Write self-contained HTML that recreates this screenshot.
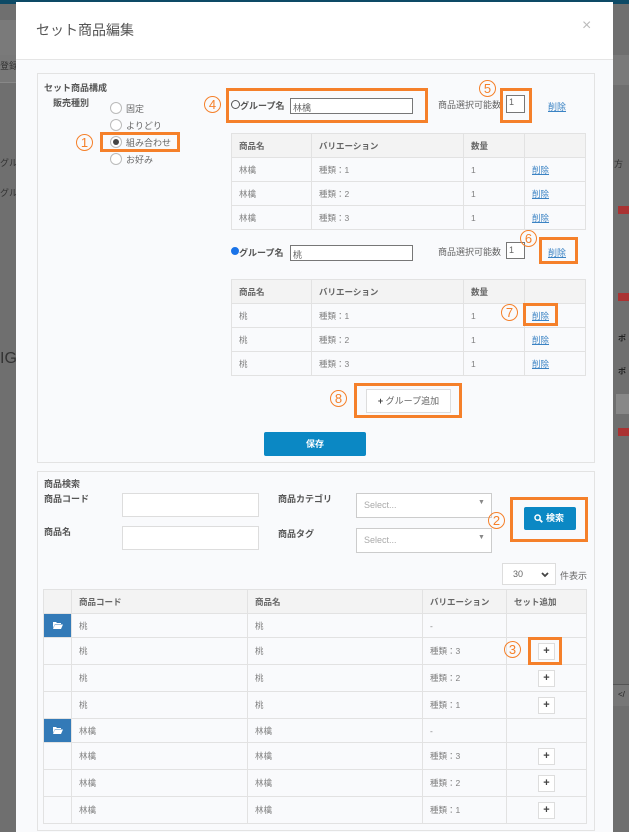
<!DOCTYPE html>
<html><head><meta charset="utf-8"><style>
*{box-sizing:border-box;margin:0;padding:0}
body{width:629px;height:821px;overflow:hidden;background:#6f6f6f;font-family:"Liberation Sans","Noto Sans CJK JP",sans-serif;color:#666;font-size:9px;position:relative}
.a{position:absolute}
.t{position:absolute;white-space:nowrap}
.ob{position:absolute;border:3px solid #f5802a}
.num{position:absolute;width:17px;height:17px;border:1px solid #f5802a;border-radius:50%;color:#f5802a;font-size:13px;line-height:15px;text-align:center}
.inp{position:absolute;background:#fff;border:1px solid #777}
.in2{position:absolute;background:#fff;border:1px solid #ddd}
table{position:absolute;border-collapse:collapse;font-size:8.5px;color:#808080}
td,th{border:1px solid #e2e2e2;padding:0 7px;text-align:left;font-weight:bold}
td{font-weight:normal}
th{background:#f3f3f3;color:#666}
td{background:#f9fafc}
.lk{color:#3b83c4;text-decoration:underline}
.rd{position:absolute;width:12px;height:12px;border:1px solid #bbb;border-radius:50%;background:#fff}
.pl{display:inline-block;width:17px;height:17px;border:1px solid #ddd;background:#fff;text-align:center;line-height:15px;font-weight:bold;color:#444;font-size:11px}
.fd{background:#337ab7!important;padding:0;text-align:center}
</style></head><body>
<div class="a" style="left:0;top:0;width:629px;height:4px;background:#0d4a66"></div>
<div class="a" style="left:0;top:20px;width:16px;height:35px;background:#7a7a7a"></div>
<div class="a" style="left:0;top:55px;width:16px;height:28px;background:#787878;border-bottom:1px solid #888"></div>
<div class="t" style="left:0;top:59px;font-size:9px;color:#333">登録</div>
<div class="t" style="left:0;top:156px;font-size:9px;color:#333">グル</div>
<div class="t" style="left:0;top:186px;font-size:9px;color:#333">グル</div>
<div class="t" style="left:0;top:350px;font-size:16px;color:#333">IG,</div>
<div class="a" style="left:613px;top:55px;width:16px;height:30px;background:#7a7a7a"></div>
<div class="t" style="left:614px;top:157px;font-size:9px;color:#333">方</div>
<div class="a" style="left:618px;top:206px;width:11px;height:8px;background:#a33"></div>
<div class="a" style="left:618px;top:293px;width:11px;height:8px;background:#a33"></div>
<div class="a" style="left:618px;top:428px;width:11px;height:8px;background:#a33"></div>
<div class="t" style="left:618px;top:333px;font-size:8px;color:#222;font-weight:bold">ポ</div>
<div class="t" style="left:618px;top:366px;font-size:8px;color:#222;font-weight:bold">ポ</div>
<div class="a" style="left:616px;top:394px;width:13px;height:20px;background:#888"></div>
<div class="a" style="left:613px;top:684px;width:16px;height:22px;background:#777;border-top:1px solid #555"></div>
<div class="t" style="left:618px;top:690px;font-size:8px;color:#222">&lt;/</div>

<div class="a" style="left:16px;top:2px;width:597px;height:830px;background:#f9fafc"></div>
<div class="a" style="left:16px;top:2px;width:597px;height:58px;background:#fff;border-bottom:1px solid #e5e5e5"></div>
<div class="t" style="left:36px;top:20px;font-size:14px;color:#555">セット商品編集</div>
<div class="t" style="left:582px;top:17px;font-size:16px;color:#bbb">×</div>

<div class="a" style="left:37px;top:73px;width:558px;height:390px;border:1px solid #e3e3e3;background:#f9fafc"></div>
<div class="t" style="left:44px;top:81px;font-weight:bold;color:#555">セット商品構成</div>
<div class="t" style="left:53px;top:96px;font-weight:bold;color:#555">販売種別</div>
<div class="rd" style="left:110px;top:102px"></div><div class="t" style="left:126px;top:102px">固定</div>
<div class="rd" style="left:110px;top:119px"></div><div class="t" style="left:126px;top:119px">よりどり</div>
<div class="rd" style="left:110px;top:136px"></div><div class="a" style="left:113px;top:139px;width:6px;height:6px;border-radius:50%;background:#444"></div><div class="t" style="left:126px;top:136px">組み合わせ</div>
<div class="rd" style="left:110px;top:153px"></div><div class="t" style="left:126px;top:153px">お好み</div>
<div class="ob" style="left:100px;top:132px;width:80px;height:20px"></div>
<div class="num" style="left:76px;top:134px">1</div>

<div class="ob" style="left:226px;top:88px;width:202px;height:35px"></div>
<div class="num" style="left:204px;top:96px">4</div>
<div class="a" style="left:231px;top:100px;width:9px;height:9px;border:1px solid #555;border-radius:50%"></div>
<div class="t" style="left:240px;top:99px;font-weight:bold;color:#555">グループ名</div>
<div class="inp" style="left:290px;top:98px;width:123px;height:16px"><span class="t" style="left:2px;top:2px">林檎</span></div>
<div class="t" style="left:438px;top:98px">商品選択可能数</div>
<div class="inp" style="left:506px;top:95px;width:19px;height:18px"><span class="t" style="left:2px;top:1px">1</span></div>
<div class="ob" style="left:500px;top:88px;width:32px;height:35px"></div>
<div class="num" style="left:479px;top:80px">5</div>
<div class="t lk" style="left:548px;top:100px">削除</div>

<table style="left:231px;top:133px;width:355px">
<tr style="height:24px"><th style="width:80px">商品名</th><th style="width:152px">バリエーション</th><th style="width:61px">数量</th><th></th></tr>
<tr style="height:24px"><td>林檎</td><td>種類：1</td><td>1</td><td><span class="lk">削除</span></td></tr>
<tr style="height:24px"><td>林檎</td><td>種類：2</td><td>1</td><td><span class="lk">削除</span></td></tr>
<tr style="height:24px"><td>林檎</td><td>種類：3</td><td>1</td><td><span class="lk">削除</span></td></tr>
</table>

<div class="a" style="left:231px;top:247px;width:8px;height:8px;border-radius:50%;background:#1a73e8;border:1px solid #1a73e8"></div>
<div class="t" style="left:239px;top:246px;font-weight:bold;color:#555">グループ名</div>
<div class="inp" style="left:290px;top:245px;width:123px;height:16px"><span class="t" style="left:2px;top:2px">桃</span></div>
<div class="t" style="left:438px;top:245px">商品選択可能数</div>
<div class="inp" style="left:506px;top:242px;width:19px;height:17px"><span class="t" style="left:2px;top:2px">1</span></div>
<div class="ob" style="left:539px;top:237px;width:39px;height:27px"></div>
<div class="num" style="left:520px;top:230px">6</div>
<div class="t lk" style="left:548px;top:246px">削除</div>

<table style="left:231px;top:279px;width:355px">
<tr style="height:24px"><th style="width:80px">商品名</th><th style="width:152px">バリエーション</th><th style="width:61px">数量</th><th></th></tr>
<tr style="height:24px"><td>桃</td><td>種類：1</td><td>1</td><td><span class="lk">削除</span></td></tr>
<tr style="height:24px"><td>桃</td><td>種類：2</td><td>1</td><td><span class="lk">削除</span></td></tr>
<tr style="height:24px"><td>桃</td><td>種類：3</td><td>1</td><td><span class="lk">削除</span></td></tr>
</table>
<div class="ob" style="left:523px;top:303px;width:35px;height:23px"></div>
<div class="num" style="left:501px;top:304px">7</div>

<div class="a" style="left:366px;top:389px;width:85px;height:24px;background:#fff;border:1px solid #ddd;color:#666;font-size:9px;line-height:22px;text-align:center"><b style="color:#444">+</b> グループ追加</div>
<div class="ob" style="left:354px;top:383px;width:108px;height:35px"></div>
<div class="num" style="left:330px;top:390px">8</div>

<div class="a" style="left:264px;top:432px;width:102px;height:24px;background:#0b88c4;border-radius:2px;color:#fff;font-weight:bold;text-align:center;line-height:24px">保存</div>

<div class="a" style="left:37px;top:471px;width:558px;height:360px;border:1px solid #e3e3e3;background:#f9fafc"></div>
<div class="t" style="left:44px;top:477px;font-weight:bold;color:#555">商品検索</div>
<div class="t" style="left:44px;top:492px;font-weight:bold;color:#555">商品コード</div>
<div class="in2" style="left:122px;top:493px;width:137px;height:24px"></div>
<div class="t" style="left:44px;top:525px;font-weight:bold;color:#555">商品名</div>
<div class="in2" style="left:122px;top:526px;width:137px;height:24px"></div>
<div class="t" style="left:278px;top:492px;font-weight:bold;color:#555">商品カテゴリ</div>
<div class="a" style="left:356px;top:493px;width:136px;height:25px;background:#fff;border:1px solid #ccc"><span class="t" style="left:7px;top:6px;color:#aaa">Select...</span><span class="t" style="left:121px;top:5px;color:#888;font-size:7px">▼</span></div>
<div class="t" style="left:278px;top:527px;font-weight:bold;color:#555">商品タグ</div>
<div class="a" style="left:356px;top:528px;width:136px;height:25px;background:#fff;border:1px solid #ccc"><span class="t" style="left:7px;top:6px;color:#aaa">Select...</span><span class="t" style="left:121px;top:5px;color:#888;font-size:7px">▼</span></div>
<div class="a" style="left:524px;top:507px;width:52px;height:23px;background:#0b88c4;border-radius:2px;color:#fff;font-weight:bold;line-height:23px"><svg class="a" style="left:10px;top:7px" width="9" height="9" viewBox="0 0 9 9"><circle cx="3.6" cy="3.6" r="2.6" fill="none" stroke="#fff" stroke-width="1.5"/><path d="M5.5 5.5L8.3 8.3" stroke="#fff" stroke-width="1.8"/></svg><span class="t" style="left:22px;top:0">検索</span></div>
<div class="ob" style="left:510px;top:497px;width:78px;height:45px"></div>
<div class="num" style="left:488px;top:512px">2</div>

<div class="a" style="left:502px;top:563px;width:54px;height:22px;background:#fff;border:1px solid #ddd"><span class="t" style="left:10px;top:5px">30</span><svg class="a" style="left:38px;top:8px" width="8" height="6" viewBox="0 0 8 6"><path d="M1 1L4 4L7 1" fill="none" stroke="#444" stroke-width="1.8"/></svg></div>
<div class="t" style="left:560px;top:569px">件表示</div>

<table style="left:43px;top:589px;width:544px">
<tr style="height:24px"><th style="width:28px"></th><th style="width:176px">商品コード</th><th style="width:175px">商品名</th><th style="width:84px">バリエーション</th><th>セット追加</th></tr>
<tr style="height:24px"><td class="fd"><svg width="10" height="8" viewBox="0 0 10 8"><path d="M0 1h3l1 1h4v1H2L0 7z M2 3.5h8L8 8H0z" fill="#fff"/></svg></td><td>桃</td><td>桃</td><td>-</td><td></td></tr>
<tr style="height:27px"><td></td><td>桃</td><td>桃</td><td>種類：3</td><td style="text-align:center"><span class="pl">+</span></td></tr>
<tr style="height:27px"><td></td><td>桃</td><td>桃</td><td>種類：2</td><td style="text-align:center"><span class="pl">+</span></td></tr>
<tr style="height:27px"><td></td><td>桃</td><td>桃</td><td>種類：1</td><td style="text-align:center"><span class="pl">+</span></td></tr>
<tr style="height:24px"><td class="fd"><svg width="10" height="8" viewBox="0 0 10 8"><path d="M0 1h3l1 1h4v1H2L0 7z M2 3.5h8L8 8H0z" fill="#fff"/></svg></td><td>林檎</td><td>林檎</td><td>-</td><td></td></tr>
<tr style="height:27px"><td></td><td>林檎</td><td>林檎</td><td>種類：3</td><td style="text-align:center"><span class="pl">+</span></td></tr>
<tr style="height:27px"><td></td><td>林檎</td><td>林檎</td><td>種類：2</td><td style="text-align:center"><span class="pl">+</span></td></tr>
<tr style="height:27px"><td></td><td>林檎</td><td>林檎</td><td>種類：1</td><td style="text-align:center"><span class="pl">+</span></td></tr>
</table>
<div class="ob" style="left:528px;top:637px;width:34px;height:28px"></div>
<div class="num" style="left:504px;top:641px">3</div>
</body></html>
